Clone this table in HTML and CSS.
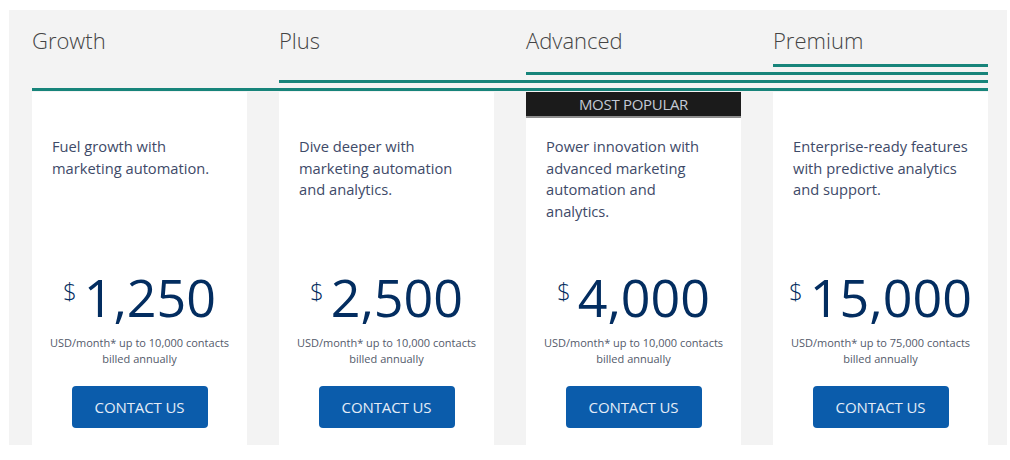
FILE: index.html
```html
<!DOCTYPE html>
<html lang="en">
<head>
  <meta charset="UTF-8" />
  <meta name="viewport" content="width=device-width, initial-scale=1.0"/>
  <title>Pricing</title>
  <link rel="stylesheet" href="styles.css">
</head>
<body>

  <!-- Pricing tiers -->
  <section class="plans">
    <h2 class="plan-name">Growth</h2>
    <h2 class="plan-name">Plus</h2>
    <h2 class="plan-name">Advanced</h2>
    <h2 class="plan-name">Premium</h2>

    <div class="rule rule-4"></div>
    <div class="rule rule-3"></div>
    <div class="rule rule-2"></div>
    <div class="rule rule-1"></div>

    <div class="card">
      <p class="desc">Fuel growth with<br>marketing automation.</p>
      <div class="price"><span class="currency">$</span><span class="amount">1,250</span></div>
      <p class="terms">USD/month* up to 10,000 contacts<br>billed annually</p>
      <button class="contact-btn">CONTACT US</button>
    </div>

    <div class="card">
      <p class="desc">Dive deeper with<br>marketing automation<br>and analytics.</p>
      <div class="price"><span class="currency">$</span><span class="amount">2,500</span></div>
      <p class="terms">USD/month* up to 10,000 contacts<br>billed annually</p>
      <button class="contact-btn">CONTACT US</button>
    </div>

    <div class="card card-popular">
      <div class="badge">MOST POPULAR</div>
      <p class="desc">Power innovation with<br>advanced marketing<br>automation and<br>analytics.</p>
      <div class="price"><span class="currency">$</span><span class="amount">4,000</span></div>
      <p class="terms">USD/month* up to 10,000 contacts<br>billed annually</p>
      <button class="contact-btn">CONTACT US</button>
    </div>

    <div class="card">
      <p class="desc">Enterprise-ready features<br>with predictive analytics<br>and support.</p>
      <div class="price"><span class="currency">$</span><span class="amount">15,000</span></div>
      <p class="terms">USD/month* up to 75,000 contacts<br>billed annually</p>
      <button class="contact-btn">CONTACT US</button>
    </div>
  </section>

</body>
</html>
```

FILE: styles.css
```css
body {
  margin: 0;
  padding: 10px 3px 0 9px;
  font-family: 'Open Sans', 'Liberation Sans', sans-serif;
  background-color: #fff;
}

.plans {
  display: grid;
  grid-template-columns: repeat(4, 215px);
  column-gap: 32px;
  padding: 15px 19px 0 23px;
  background-color: #f3f3f3;
}

.plan-name {
  grid-row: 1;
  margin: 0;
  font-size: 22px;
  font-weight: 300;
  line-height: 30px;
  color: #444;
}

.rule {
  height: 3px;
  margin-top: 5px;
  background-color: #17847a;
}

.rule-4 { grid-row: 2; grid-column: 4 / -1; margin-top: 9px; }
.rule-3 { grid-row: 3; grid-column: 3 / -1; }
.rule-2 { grid-row: 4; grid-column: 2 / -1; }
.rule-1 { grid-row: 5; grid-column: 1 / -1; }

.card {
  grid-row: 6;
  margin-top: 1px;
  padding-bottom: 17px;
  background-color: #fff;
  display: flex;
  flex-direction: column;
  align-items: center;
}

.badge {
  align-self: stretch;
  height: 24px;
  line-height: 24px;
  background-color: #1b1b1b;
  border-bottom: 2px solid #8f8f8f;
  color: #c4cad6;
  font-size: 15px;
  letter-spacing: -0.3px;
  text-align: center;
}

.desc {
  align-self: stretch;
  height: 112px;
  margin: 44px 0 0;
  padding: 0 10px 0 20px;
  font-size: 14.7px;
  line-height: 21.5px;
  color: #3e4a68;
  white-space: nowrap;
}

.card-popular .desc {
  margin-top: 18px;
}

.price {
  display: flex;
  align-items: flex-start;
  margin-top: 21px;
  color: #032d60;
}

.currency {
  margin: 10px 7px 0 0;
  font-size: 24px;
  font-weight: 300;
  line-height: 24px;
}

.amount {
  font-size: 52px;
  line-height: 56px;
}

.terms {
  margin: 10px 0 0;
  font-size: 11px;
  line-height: 16px;
  color: #535a6a;
  text-align: center;
}

.contact-btn {
  width: 136px;
  height: 42px;
  margin-top: 19px;
  border: none;
  border-radius: 4px;
  background-color: #0b5cab;
  color: #e4ecf7;
  font-family: inherit;
  font-size: 15px;
  font-weight: 500;
  letter-spacing: -0.1px;
  cursor: pointer;
}
```
